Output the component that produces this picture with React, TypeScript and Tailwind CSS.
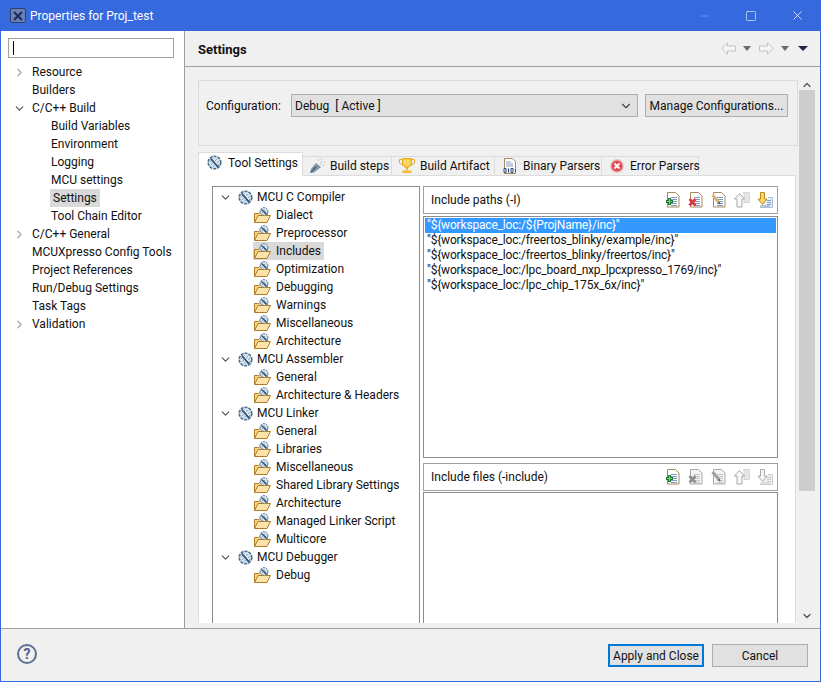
import React from "react";
import { ChevronDown, ChevronRight, ChevronUp, Minus, Square, X } from "lucide-react";

const font = "font-['Roboto','Open_Sans',sans-serif]";

type NavItem = { label: string; level: number; arrow?: "open" | "closed"; selected?: boolean };

const navItems: NavItem[] = [
  { label: "Resource", level: 0, arrow: "closed" },
  { label: "Builders", level: 0 },
  { label: "C/C++ Build", level: 0, arrow: "open" },
  { label: "Build Variables", level: 1 },
  { label: "Environment", level: 1 },
  { label: "Logging", level: 1 },
  { label: "MCU settings", level: 1 },
  { label: "Settings", level: 1, selected: true },
  { label: "Tool Chain Editor", level: 1 },
  { label: "C/C++ General", level: 0, arrow: "closed" },
  { label: "MCUXpresso Config Tools", level: 0 },
  { label: "Project References", level: 0 },
  { label: "Run/Debug Settings", level: 0 },
  { label: "Task Tags", level: 0 },
  { label: "Validation", level: 0, arrow: "closed" },
];

const toolTree: { name: string; options: { label: string; selected?: boolean }[] }[] = [
  {
    name: "MCU C Compiler",
    options: [
      { label: "Dialect" },
      { label: "Preprocessor" },
      { label: "Includes", selected: true },
      { label: "Optimization" },
      { label: "Debugging" },
      { label: "Warnings" },
      { label: "Miscellaneous" },
      { label: "Architecture" },
    ],
  },
  { name: "MCU Assembler", options: [{ label: "General" }, { label: "Architecture & Headers" }] },
  {
    name: "MCU Linker",
    options: [
      { label: "General" },
      { label: "Libraries" },
      { label: "Miscellaneous" },
      { label: "Shared Library Settings" },
      { label: "Architecture" },
      { label: "Managed Linker Script" },
      { label: "Multicore" },
    ],
  },
  { name: "MCU Debugger", options: [{ label: "Debug" }] },
];

const includePaths = [
  '"${workspace_loc:/${ProjName}/inc}"',
  '"${workspace_loc:/freertos_blinky/example/inc}"',
  '"${workspace_loc:/freertos_blinky/freertos/inc}"',
  '"${workspace_loc:/lpc_board_nxp_lpcxpresso_1769/inc}"',
  '"${workspace_loc:/lpc_chip_175x_6x/inc}"',
];

const ToolIcon = () => (
  <svg width="15" height="15" viewBox="0 0 15 15" className="shrink-0">
    <circle cx="7.500" cy="7.500" r="6.300" fill="#d5e3ef" stroke="#4d6f8e" strokeWidth="1.600" strokeDasharray="3 1" />
    <path d="M3 7l4 -4M4 10l6 -6M6 12l6 -6M9 12l3 -3" stroke="#8fabc3" strokeWidth="1" />
    <path d="M4 3.500l7 8" stroke="#34506c" strokeWidth="2" />
    <path d="M5 3l6 7" stroke="#fff" strokeWidth="1" />
  </svg>
);

const OptionIcon = () => (
  <svg width="17" height="16" viewBox="0 0 17 16" className="shrink-0">
    <path d="M.5 15V6.500h4l1-1h8v3" fill="#f7d48a" stroke="#b07c28" />
    <path d="M.5 15.500l3.500-7h12.500l-3.500 7z" fill="#fde3a8" stroke="#b07c28" />
    <circle cx="10" cy="4.500" r="3.900" fill="#d5e3ef" stroke="#4d6f8e" strokeDasharray="2 .8" />
    <path d="M8 6l3 -3M10 7l2 -2" stroke="#8fabc3" />
    <path d="M7.500 2.500l5 4.500" stroke="#34506c" strokeWidth="1.500" />
  </svg>
);

const StepsIcon = () => (
  <svg width="16" height="16" viewBox="0 0 16 16" className="shrink-0">
    <path d="M1 15l1 -4 5 -6 5 4 -7 5.500z" fill="#7d95a8" />
    <path d="M2 14l5 -5" stroke="#4f6577" strokeWidth="1.400" />
    <path d="M9 2h1M12 1h1M12 4h1M15 4h1M14 7h1M11 6h1" stroke="#b9a98a" />
  </svg>
);

const TrophyIcon = () => (
  <svg width="16" height="16" viewBox="0 0 16 16" className="shrink-0">
    <path d="M3 1.500H.5V5L4 7.500M13 1.500h2.500V5L12 7.500" fill="none" stroke="#e8a820" />
    <path d="M3.500 .5h9v6l-3 3h-3l-3-3z" fill="#f9ca45" stroke="#e8a820" />
    <path d="M6 2v5M9 2v5" stroke="#fdeeb0" />
    <path d="M7 9.500h2V12H7z" fill="#f0b429" />
    <path d="M3.500 12.500h9V15h-9z" fill="#f5bb2e" />
  </svg>
);

const BinaryIcon = () => (
  <svg width="14" height="16" viewBox="0 0 14 16" className="shrink-0">
    <path d="M1.500 .5h8l3 3v12h-11z" fill="#fff" stroke="#a58a5a" />
    <path d="M3 4h5M3 6h7M3 8h7" stroke="#7f9cc0" />
    <rect x="0" y="10" width="14" height="5" fill="#eef3f8" />
    <path d="M1 10.500h2v4H1zM5.500 10.500v4M8 10.500h2v4H8zM12.500 10.500v4" fill="none" stroke="#2f4a78" />
  </svg>
);

const ErrorIcon = () => (
  <svg width="14" height="14" viewBox="0 0 14 14" className="shrink-0">
    <circle cx="7" cy="7" r="6" fill="#e2474f" stroke="#e6a8ac" strokeWidth="1.500" />
    <path d="M4.500 4.500l5 5M9.500 4.500l-5 5" stroke="#fff" strokeWidth="1.800" />
  </svg>
);

const DocBase = ({ off }: { off?: boolean }) => (
  <>
    <path d="M2.500 .5h8l3.500 3.500v11H2.500z" fill={off ? "#f4f4f4" : "#fff"} stroke={off ? "#a8a8a8" : "#a58a5a"} />
    <path d="M6 5.500h6M6 7.500h6M6 9.500h6M6 11.500h6M6 13.500h6" stroke={off ? "#c4c4c4" : "#7f9cc0"} />
  </>
);

const AddIcon = () => (
  <svg width="16" height="16" viewBox="0 0 16 16">
    <DocBase />
    <path d="M4.500 6v7M1 9.500h7" stroke="#1d7a36" strokeWidth="3" />
    <path d="M4.500 7v5M2 9.500h5" stroke="#7fd65a" strokeWidth="1" />
  </svg>
);

const DeleteIcon = ({ off }: { off?: boolean }) => (
  <svg width="16" height="16" viewBox="0 0 16 16">
    <DocBase off={off} />
    <path d="M1.500 7l6 6.500M7.500 7l-6 6.500" stroke={off ? "#8e8e8e" : "#dc3a42"} strokeWidth="2.600" />
  </svg>
);

const EditIcon = ({ off }: { off?: boolean }) => (
  <svg width="16" height="16" viewBox="0 0 16 16">
    <DocBase off={off} />
    <path d="M1.500 3l6 7" stroke={off ? "#a2a2a2" : "#d9b27a"} strokeWidth="3" />
    <path d="M7.500 10l1.500 2" stroke="#555" strokeWidth="1.500" />
  </svg>
);

const UpIcon = () => (
  <svg width="16" height="16" viewBox="0 0 16 16">
    <path d="M9 .5h6.500v10H10V.5" fill="#e6e6e6" stroke="#d6d6d6" />
    <path d="M5.500 1.500l5 5.500H8v8H3V7H.5z" fill="#f8f8f8" stroke="#a8a8a8" />
  </svg>
);

const DownIcon = ({ off }: { off?: boolean }) => (
  <svg width="16" height="16" viewBox="0 0 16 16">
    <path d="M3 15.500h12.500V5.500H11" fill="#eaf0f7" stroke={off ? "#cccccc" : "#a8bdd6"} />
    <path d="M10 8.500h4M10 10.500h4M10 12.500h4M3 14h10" stroke={off ? "#cccccc" : "#7f9cc0"} />
    <path d="M3.500 .5h4V7h2.500l-4.500 5.500L1 7h2.500z" fill={off ? "#f6f6f6" : "#fbd76b"} stroke={off ? "#a8a8a8" : "#bb8a1e"} />
  </svg>
);

const NavTriangle = ({ dark }: { dark?: boolean }) => (
  <svg width={dark ? 10 : 8} height="5" viewBox="0 0 10 5" preserveAspectRatio="none">
    <path d="M0 0h10L5 5z" fill={dark ? "#2d2140" : "#6b6b6b"} />
  </svg>
);

const BackArrow = ({ flip }: { flip?: boolean }) => (
  <svg width="15" height="13" viewBox="0 0 15 13" className={flip ? "-scale-x-100" : ""}>
    <path d="M.8 6.500L6.500 .8v3.200h8v5h-8v3.200z" fill="#f4f4f4" stroke="#c3c3c3" />
  </svg>
);

const PaneHeader = ({ title, off }: { title: string; off?: boolean }) => (
  <div className="h-[28px] shrink-0 border border-[#a0a0a0] flex items-center justify-between pl-[7px] pr-[4px]">
    <span className="text-[#111]">{title}</span>
    <div className="flex items-center gap-[7px]">
      <AddIcon />
      <DeleteIcon off={off} />
      <EditIcon off={off} />
      <UpIcon />
      <DownIcon off={off} />
    </div>
  </div>
);

const App: React.FC = () => {
  return (
    <div className={`${font} w-[821px] h-[682px] flex flex-col overflow-hidden bg-[#f0f0f0] border-x border-b border-[#3569dd] text-[12px] text-[#111] leading-[18px]`}>
      {/* title bar */}
      <div className="h-[31px] shrink-0 bg-[#3569dd] -mx-px flex items-center justify-between">
        <div className="flex items-center pl-[10px] gap-[4px]">
          <div className="w-[16px] h-[15px] rounded-[2px] bg-[#6c80b8] border border-[#2e3e6e] flex items-center justify-center">
            <X size={14} strokeWidth={3.500} color="#1d2c5c" />
          </div>
          <span className="text-white">Properties for Proj_test</span>
        </div>
        <div className="flex items-center pr-[1px]">
          <div className="w-[46px] flex justify-center"><Minus size={12} color="#6f95ec" /></div>
          <div className="w-[46px] flex justify-center"><Square size={12} color="#fff" strokeWidth={1.200} /></div>
          <div className="w-[46px] flex justify-center"><X size={15} color="#fff" strokeWidth={1.200} /></div>
        </div>
      </div>

      <div className="flex-1 flex min-h-0">
        {/* left nav */}
        <div className="w-[184px] shrink-0 bg-white border-r border-[#a0a0a0] flex flex-col">
          <div className="pl-[7px] pr-[10px] pt-[7px]">
            <div className="h-[20px] border border-[#a0a0a0] flex items-center pl-[4px]">
              <div className="w-px h-[14px] bg-black" />
            </div>
          </div>
          <div className="mt-[5px]">
            {navItems.map((item) => (
              <div key={item.label} className="h-[18px] flex items-center">
                <div className={`w-[31px] shrink-0 flex justify-end pr-[6px] ${item.level === 1 ? "ml-[19px]" : ""}`}>
                  {item.arrow === "closed" && <ChevronRight size={13} color="#a6a6a6" strokeWidth={2.200} />}
                  {item.arrow === "open" && <ChevronDown size={13} color="#555" strokeWidth={2.200} />}
                </div>
                <span className={`px-[1px] -ml-px h-[18px] ${item.selected ? "bg-[#d9d9d9] px-[3px] -ml-[3px]" : ""}`}>
                  {item.label}
                </span>
              </div>
            ))}
          </div>
        </div>

        {/* right side */}
        <div className="flex-1 min-w-0 flex flex-col">
          <div className="h-[36px] shrink-0 border-b border-[#a0a0a0] flex items-center justify-between pl-[13px] pr-[12px]">
            <span className="text-[13px] font-bold mt-[2px]">Settings</span>
            <div className="flex items-center">
              <BackArrow />
              <div className="ml-[7px]"><NavTriangle /></div>
              <div className="ml-[8px]"><BackArrow flip /></div>
              <div className="ml-[7px]"><NavTriangle /></div>
              <div className="ml-[9px]"><NavTriangle dark /></div>
            </div>
          </div>

          <div className="flex-1 min-h-0 flex pl-[13px] pt-[13px] pb-[5px]">
            <div className="w-[600px] shrink-0 flex flex-col min-h-0">
              {/* configuration group */}
              <div className="h-[66px] shrink-0 border border-[#dcdcdc] flex items-start pt-[13px] pl-[7px]">
                <span className="w-[85px] shrink-0 mt-[3px]">Configuration:</span>
                <div className="w-[347px] h-[23px] bg-[#e1e1e1] border border-[#adadad] flex items-center justify-between pl-[3px] pr-[4px]">
                  <span className="whitespace-pre">Debug  [ Active ]</span>
                  <ChevronDown size={14} color="#444" />
                </div>
                <div className="ml-[7px] w-[143px] h-[23px] bg-[#e1e1e1] border border-[#adadad] flex items-center justify-center whitespace-nowrap">
                  Manage Configurations...
                </div>
              </div>

              {/* tabs */}
              <div className="flex items-end h-[24px] mt-[6px] shrink-0 relative z-10 -mb-px whitespace-nowrap">
                <div className="w-[105px] h-[24px] bg-white border border-b-0 border-[#dcdcdc] flex items-center pl-[8px] pb-[4px] gap-[6px]">
                  <ToolIcon />
                  <span>Tool Settings</span>
                </div>
                <div className="w-[89px] h-[20px] border-t border-r border-b border-[#dcdcdc] flex items-center pl-[6px] gap-[5px]">
                  <StepsIcon />
                  <span>Build steps</span>
                </div>
                <div className="w-[103px] h-[20px] border-t border-r border-b border-[#dcdcdc] flex items-center pl-[7px] gap-[5px]">
                  <TrophyIcon />
                  <span>Build Artifact</span>
                </div>
                <div className="w-[107px] h-[20px] border-t border-r border-b border-[#dcdcdc] flex items-center pl-[8px] gap-[6px]">
                  <BinaryIcon />
                  <span>Binary Parsers</span>
                </div>
                <div className="w-[97px] h-[20px] border-t border-r border-b border-[#dcdcdc] flex items-center pl-[8px] gap-[6px]">
                  <ErrorIcon />
                  <span>Error Parsers</span>
                </div>
              </div>

              {/* tab body */}
              <div className="flex-1 min-h-0 w-[598px] bg-white border-l border-r border-t border-[#dcdcdc] flex pt-[10px] pl-[13px] pr-[17px] overflow-hidden gap-[3px]">
                <div className="w-[208px] shrink-0 border border-b-0 border-[#8c8c8c] pt-[1px] overflow-hidden">
                  {toolTree.map((tool) => (
                    <div key={tool.name}>
                      <div className="h-[18px] flex items-center">
                        <div className="w-[25px] flex justify-end pr-[6px]">
                          <ChevronDown size={13} color="#555" strokeWidth={2.200} />
                        </div>
                        <ToolIcon />
                        <span className="ml-[4px]">{tool.name}</span>
                      </div>
                      {tool.options.map((opt) => (
                        <div key={tool.name + opt.label} className="h-[18px] flex items-center pl-[40px]">
                          <div className={`h-[18px] flex items-center gap-[5px] pl-[1px] pr-[3px] ${opt.selected ? "bg-[#d9d9d9]" : ""}`}>
                            <OptionIcon />
                            <span>{opt.label}</span>
                          </div>
                        </div>
                      ))}
                    </div>
                  ))}
                </div>

                <div className="flex-1 min-w-0 flex flex-col">
                  <PaneHeader title="Include paths (-I)" />
                  <div className="h-[242px] shrink-0 mt-[2px] border border-[#8c8c8c] p-px">
                    {includePaths.map((p, i) => (
                      <div key={p} className={`h-[15px] leading-[15px] pl-[2px] tracking-[-0.18px] whitespace-nowrap ${i === 0 ? "bg-[#3399ff] text-white" : ""}`}>
                        {p}
                      </div>
                    ))}
                  </div>
                  <div className="mt-[5px]">
                    <PaneHeader title="Include files (-include)" off />
                  </div>
                  <div className="flex-1 min-h-0 mt-px border border-b-0 border-[#8c8c8c]" />
                </div>
              </div>
            </div>

            {/* scrollbar */}
            <div className="w-[16px] shrink-0 flex flex-col ml-[1px] -mb-[5px]">
              <div className="h-[10px] flex items-center justify-center shrink-0"><ChevronUp size={12} color="#555" strokeWidth={2.500} /></div>
              <div className="h-[401px] bg-[#cdcdcd] shrink-0" />
              <div className="flex-1" />
              <div className="h-[16px] flex items-center justify-center shrink-0 mb-[4px]"><ChevronDown size={12} color="#555" strokeWidth={2.500} /></div>
            </div>
          </div>
        </div>
      </div>

      {/* bottom bar */}
      <div className="h-[53px] shrink-0 border-t border-[#a0a0a0] flex items-start justify-between pt-[15px] pl-[16px] pr-[12px]">
        <div className="w-[20px] h-[20px] rounded-full border-2 border-[#5c7096] text-[#4f6488] font-bold text-[14px] leading-[16px] flex items-center justify-center">?</div>
        <div className="flex items-center gap-[8px]">
          <div className="w-[96px] h-[23px] bg-[#e1e1e1] border-2 border-[#0078d7] flex items-center justify-center whitespace-nowrap">Apply and Close</div>
          <div className="w-[96px] h-[23px] bg-[#e1e1e1] border border-[#adadad] flex items-center justify-center">Cancel</div>
        </div>
      </div>
    </div>
  );
};

export default App;
